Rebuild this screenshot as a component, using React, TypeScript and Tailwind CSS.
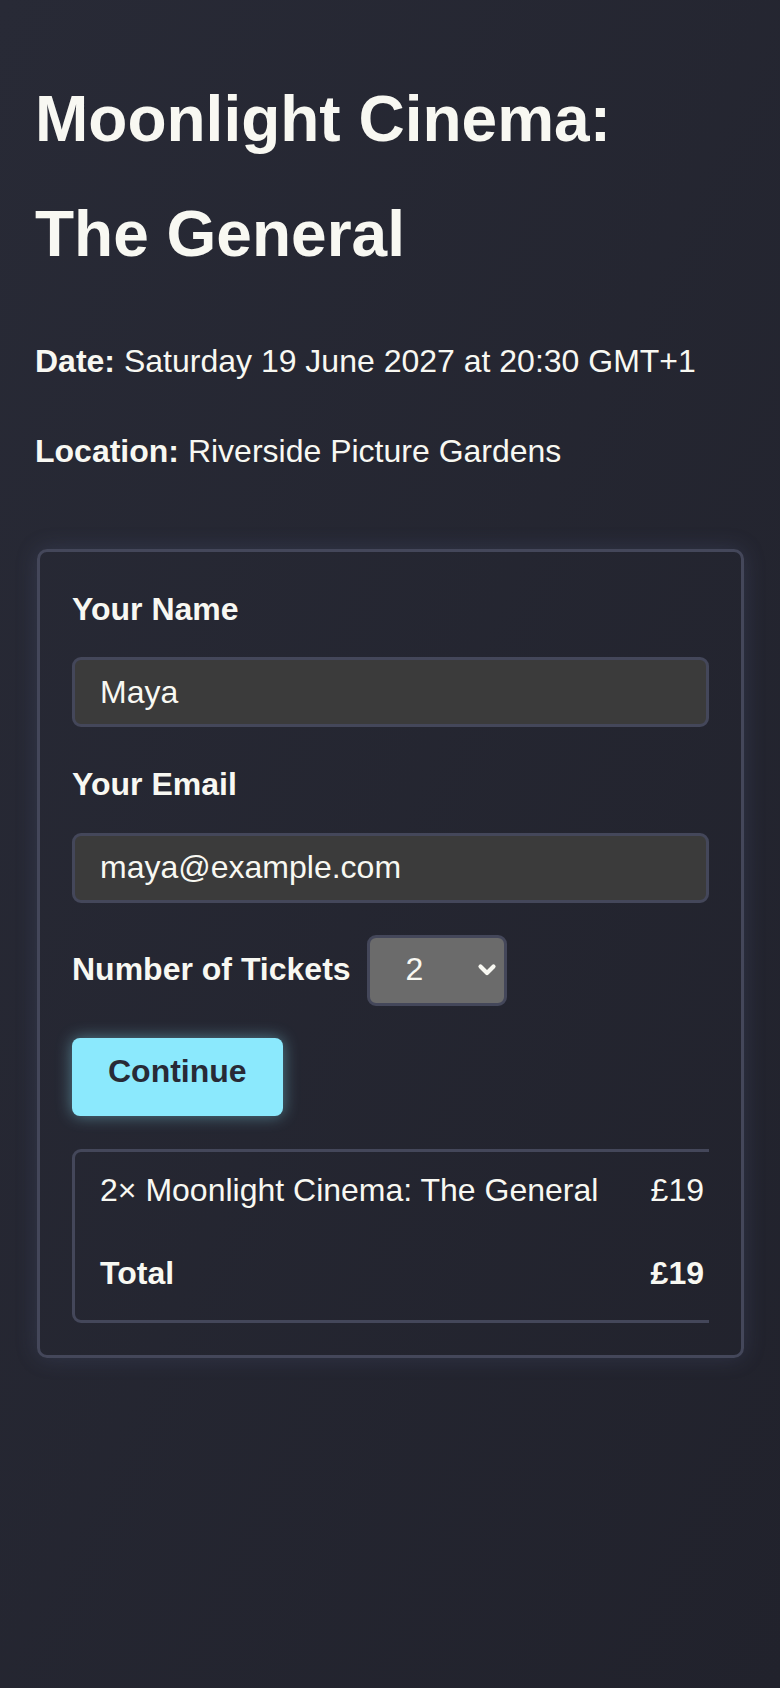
import { useState } from 'react';

const PRICE = 9.5;

const App = () => {
  const [name, setName] = useState('Maya');
  const [email, setEmail] = useState('maya@example.com');
  const [tickets, setTickets] = useState('2');

  const count = Number(tickets);
  const total = `£${Math.round(count * PRICE)}`;

  return (
    <div className="min-h-screen bg-linear-to-br from-[#282a36] to-[#21222c] px-[35px] pt-[62px] pb-10 font-['Liberation_Sans',Arial,sans-serif] text-[32px] leading-[1.8] text-[#f8f8f2]">
      <h1 className="text-[64px] font-bold leading-[1.8]">
        Moonlight Cinema:
        <br />
        The General
      </h1>

      <p className="mt-[41px]">
        <strong>Date:</strong> Saturday 19 June 2027 at 20:30 GMT+1
      </p>
      <p className="mt-[32px]">
        <strong>Location:</strong> Riverside Picture Gardens
      </p>

      {/* Formulário de reserva */}
      <div className="mt-[68px] ml-[2px] w-[707px] rounded-[10px] border-[3px] border-[#44475a] px-[32px] pt-[29px] pb-[32px] shadow-[0_0_22px_rgba(98,114,164,0.22)]">
        <label className="mb-[19px] block font-bold">Your Name</label>
        <input
          type="text"
          value={name}
          onChange={(e) => setName(e.target.value)}
          className="block h-[70px] w-full rounded-[9px] border-[3px] border-[#44475a] bg-[#3b3b3b] px-[25px] text-[32px] text-[#f8f8f2] outline-none"
        />

        <label className="mt-[29px] mb-[19px] block font-bold">Your Email</label>
        <input
          type="email"
          value={email}
          onChange={(e) => setEmail(e.target.value)}
          className="block h-[70px] w-full rounded-[9px] border-[3px] border-[#44475a] bg-[#3b3b3b] px-[25px] text-[32px] text-[#f8f8f2] outline-none"
        />

        <div className="mt-[32px] flex items-center gap-[16px]">
          <label className="font-bold">Number of Tickets</label>
          <div className="relative">
            <select
              value={tickets}
              onChange={(e) => setTickets(e.target.value)}
              className="block h-[71px] w-[140px] appearance-none rounded-[9px] border-[3px] border-[#44475a] bg-[#6b6b6b] pl-[36px] text-[32px] text-[#f8f8f2] outline-none"
            >
              {[1, 2, 3, 4, 5, 6].map((n) => (
                <option key={n} value={n}>
                  {n}
                </option>
              ))}
            </select>
            <svg
              viewBox="0 0 20 13"
              className="pointer-events-none absolute top-1/2 right-[10px] h-[13px] w-[20px] -translate-y-1/2"
              fill="none"
              stroke="#f8f8f2"
              strokeWidth="4.2"
              strokeLinecap="round"
              strokeLinejoin="round"
            >
              <polyline points="3.5,3 10,9.5 16.5,3" />
            </svg>
          </div>
        </div>

        <button className="mt-[32px] block rounded-[8px] bg-[#8be9fd] px-[36px] pt-[5px] pb-[16px] font-bold leading-[1.8] text-[#282a36] shadow-[0_0_16px_rgba(139,233,253,0.45)]">
          Continue
        </button>

        {/* Resumo do pedido */}
        <div className="mt-[33px] w-full overflow-hidden">
          <div className="w-[660px] rounded-[9px] border-[3px] border-[#44475a] px-[25px] pt-[10px] pb-[17px]">
            <div className="flex justify-between">
              <span>{count}× Moonlight Cinema: The General</span>
              <span>{total}</span>
            </div>
            <div className="mt-[25px] flex justify-between font-bold">
              <span>Total</span>
              <span>{total}</span>
            </div>
          </div>
        </div>
      </div>
    </div>
  );
};

export default App;
